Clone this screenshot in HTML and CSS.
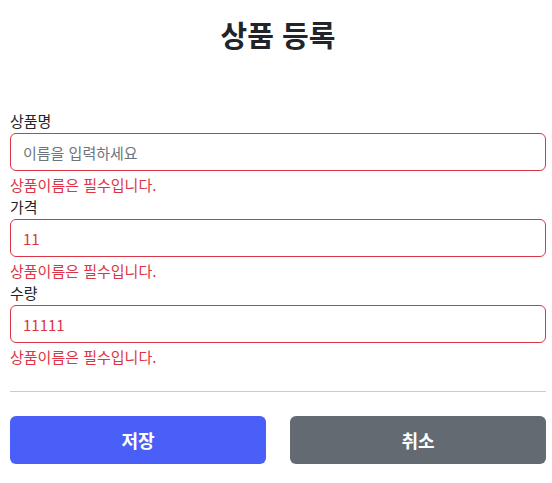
FILE: index.html
```html
<!DOCTYPE html>
<html lang="ko">
<head>
<meta charset="utf-8">
<link rel="stylesheet" href="styles.css">
</head>
<body>
<div class="container">
  <div class="header"><h2 class="title">상품 등록</h2></div>
  <form class="form">
    <div class="field">
      <label class="label">상품명</label>
      <input class="input invalid" type="text" placeholder="이름을 입력하세요">
      <div class="feedback">상품이름은 필수입니다.</div>
    </div>
    <div class="field">
      <label class="label">가격</label>
      <input class="input invalid" type="text" value="11">
      <div class="feedback">상품이름은 필수입니다.</div>
    </div>
    <div class="field">
      <label class="label">수량</label>
      <input class="input invalid" type="text" value="11111">
      <div class="feedback">상품이름은 필수입니다.</div>
    </div>
    <hr class="divider">
    <div class="actions">
      <button class="btn btn-primary" type="button">저장</button>
      <button class="btn btn-secondary" type="button">취소</button>
    </div>
  </form>
</div>
</body>
</html>
```
FILE: styles.css
```css
* { box-sizing: border-box; }
html, body { margin: 0; padding: 0; background: #fff; }
body {
  font-family: "Noto Sans CJK KR", "Noto Sans", sans-serif;
  color: #212529;
}
.container { padding: 0 6px 0 10px; }
.header { padding-top: 15px; padding-bottom: 56px; text-align: center; }
.title { margin: 0; font-size: 29px; font-weight: 700; line-height: 38px; color: #212529; }
.form { display: flex; flex-direction: column; }
.field { display: flex; flex-direction: column; }
.label { font-size: 15px; line-height: 24px; height: 24px; }
.input {
  height: 38px;
  border: 1px solid #dc3545;
  border-radius: 6px;
  padding: 0 12px;
  font-family: inherit;
  font-size: 15px;
  color: #dc3545;
  outline: none;
  background: #fff;
}
.input::placeholder { color: #6c757d; }
.feedback { margin-top: 4px; font-size: 15px; line-height: 20px; color: #dc3545; }
.divider { margin: 24px 0 24px; border: 0; border-top: 1px solid #cbcbcb; height: 0; }
.actions { display: grid; grid-template-columns: 1fr 1fr; gap: 24px; }
.btn {
  height: 48px;
  border: 0;
  border-radius: 6px;
  color: #fff;
  font-family: inherit;
  font-size: 18px;
  font-weight: 700;
}
.btn-primary { background: #4a5ff8; }
.btn-secondary { background: #636a72; }
```
